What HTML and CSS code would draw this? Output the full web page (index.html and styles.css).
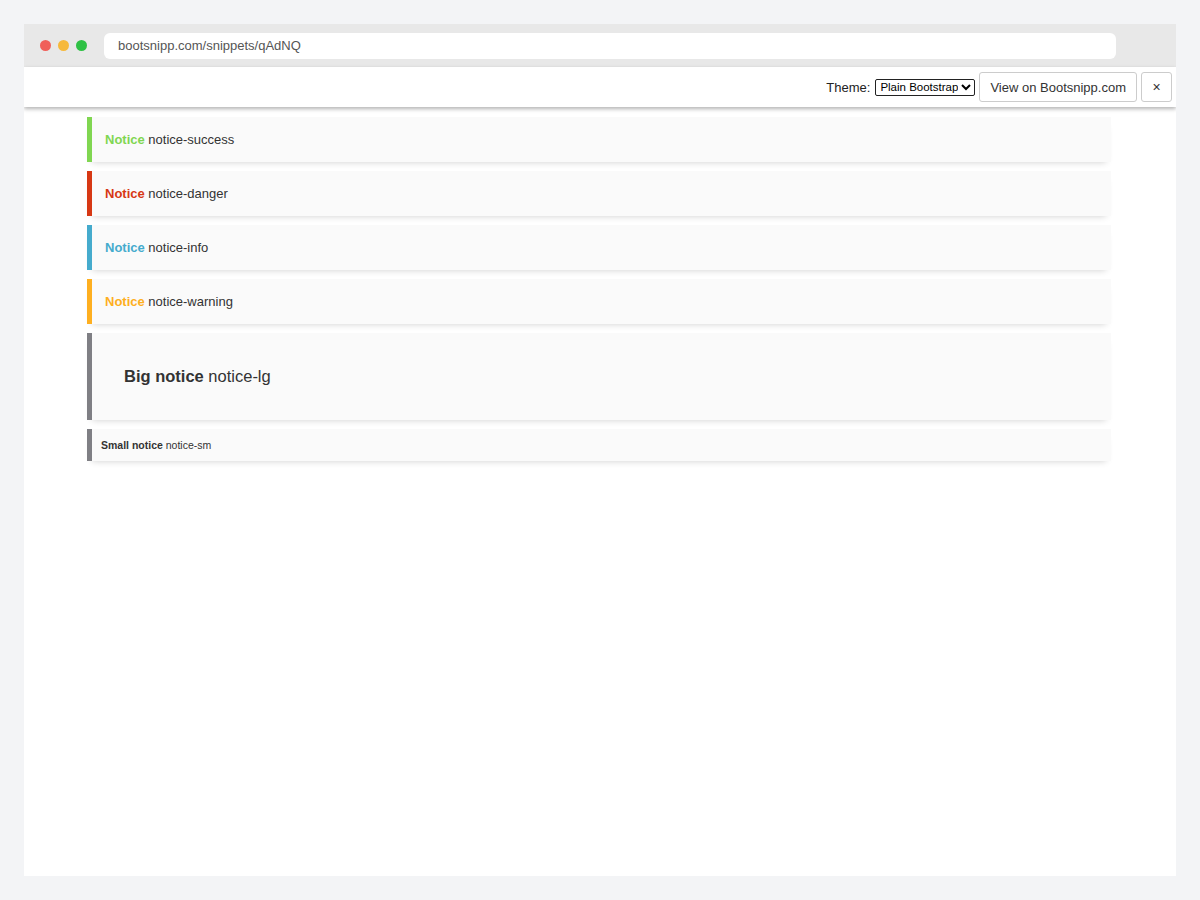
FILE: index.html
```html
<!DOCTYPE html>
<html lang="en">
<head>
    <meta charset="UTF-8">
    <title>Bootsnipp notices</title>
    <link rel="stylesheet" href="styles.css">
</head>
<body>

<div class="window">
    <!-- Title bar -->
    <div class="titlebar">
        <div class="dots">
            <span class="dot dot-red"></span>
            <span class="dot dot-yellow"></span>
            <span class="dot dot-green"></span>
        </div>
        <div class="url">bootsnipp.com/snippets/qAdNQ</div>
    </div>

    <!-- Toolbar -->
    <div class="toolbar">
        <label class="theme-label">Theme:</label>
        <select class="theme-select">
            <option>Plain Bootstrap</option>
        </select>
        <button class="tool-btn">View on Bootsnipp.com</button>
        <button class="tool-btn close-btn">&times;</button>
    </div>

    <div class="content">
        <div class="notice notice-success"><strong>Notice</strong> notice-success</div>
        <div class="notice notice-danger"><strong>Notice</strong> notice-danger</div>
        <div class="notice notice-info"><strong>Notice</strong> notice-info</div>
        <div class="notice notice-warning"><strong>Notice</strong> notice-warning</div>
        <div class="notice notice-lg"><strong>Big notice</strong> notice-lg</div>
        <div class="notice notice-sm"><strong>Small notice</strong> notice-sm</div>
    </div>
</div>

</body>
</html>
```

FILE: styles.css
```css
body {
    margin: 0;
    background-color: #f3f4f6;
    font-family: "Liberation Sans", Arial, sans-serif;
    color: #333;
}

.window {
    margin: 24px;
    height: 852px;
    background-color: #fff;
    overflow: hidden;
}

.titlebar {
    height: 43px;
    background-color: #e8e8e8;
    display: flex;
    align-items: center;
}

.dots {
    display: flex;
    gap: 7px;
    padding-left: 16px;
    width: 64px;
}

.dot {
    width: 11px;
    height: 11px;
    border-radius: 50%;
}

.dot-red { background-color: #f0605a; }
.dot-yellow { background-color: #f6b93b; }
.dot-green { background-color: #2fc145; }

.url {
    width: 1012px;
    height: 26px;
    line-height: 26px;
    background-color: #fff;
    border-radius: 6px;
    padding-left: 14px;
    box-sizing: border-box;
    font-size: 13px;
    color: #555;
}

.toolbar {
    height: 40px;
    display: flex;
    align-items: center;
    justify-content: flex-end;
    padding-right: 4px;
    gap: 4px;
    box-shadow: 0 2px 4px rgba(0, 0, 0, 0.3);
    position: relative;
    font-size: 13px;
    color: #222;
}

.theme-label {
    margin-right: 1px;
}

.theme-select {
    font-family: "Liberation Sans", Arial, sans-serif;
    font-size: 11.5px;
    height: 17px;
    padding: 0;
    border: 1px solid #222;
    border-radius: 2px;
    background: #fff;
    color: #000;
}

.tool-btn {
    height: 30px;
    padding: 0 10px;
    background-color: #fff;
    border: 1px solid #ccc;
    border-radius: 3px;
    font-family: "Liberation Sans", Arial, sans-serif;
    font-size: 13px;
    color: #333;
}

.close-btn {
    width: 31px;
    padding: 0;
    font-size: 14px;
}

.content {
    padding: 10px 65px 0 63px;
}

.notice {
    padding: 13px;
    background-color: #fafafa;
    border-left: 5px solid #7f7f84;
    margin-bottom: 9px;
    box-shadow: 0 5px 7px -5px rgba(0, 0, 0, 0.2);
    font-size: 13px;
    line-height: 19px;
}

.notice-success { border-color: #80d651; }
.notice-success strong { color: #80d651; }

.notice-danger { border-color: #d73814; }
.notice-danger strong { color: #d73814; }

.notice-info { border-color: #45abcd; }
.notice-info strong { color: #45abcd; }

.notice-warning { border-color: #feaf20; }
.notice-warning strong { color: #feaf20; }

.notice-lg {
    padding: 31px 31px 31px 32px;
    font-size: 16.5px;
    line-height: 25px;
}

.notice-sm {
    padding: 9px;
    font-size: 10.5px;
    line-height: 14px;
}
```
